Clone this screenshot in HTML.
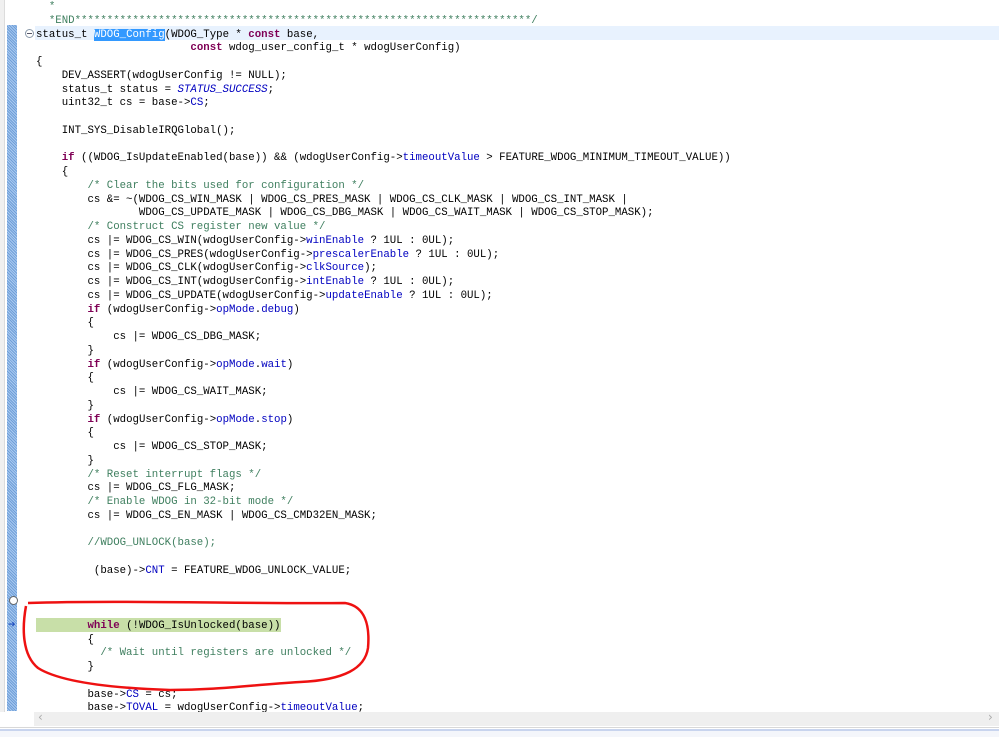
<!DOCTYPE html>
<html><head><meta charset="utf-8"><style>
html,body{margin:0;padding:0;width:999px;height:737px;overflow:hidden;background:#fff;position:relative}
.code{position:absolute;left:36px;top:1px;font-family:"Liberation Mono",monospace;font-size:10.73px;line-height:13.76px;white-space:pre;color:#000}
.l{height:13.76px}
.k{color:#7f0055;font-weight:bold}
.c{color:#3f7f5f}
.f{color:#0000c0}
.i{color:#0000c0;font-style:italic}
.sel{background:#3399ff;color:#fff}
</style></head><body>
<div style="position:absolute;left:0;top:0;width:4px;height:712px;background:#f0f0f0;border-right:1px solid #dcdcdc"></div>
<div style="position:absolute;left:7px;top:25px;width:10px;height:686px;background:repeating-linear-gradient(45deg,#6f9fd8 0 1px,#a9c9f0 1px 2px)"></div>
<div style="position:absolute;left:35px;top:26px;width:964px;height:14px;background:#e8f2fe"></div>
<div style="position:absolute;left:36px;top:618px;width:245px;height:14px;background:#c8dfa8"></div>
<div style="position:absolute;left:25px;top:29px;width:7px;height:7px;border:1px solid #8a99aa;border-radius:50%;font-size:0"><div style="position:absolute;left:1px;top:3px;width:5px;height:1px;background:#556"></div></div>
<div style="position:absolute;left:9px;top:596px;width:7px;height:7px;border:1px solid #666;border-radius:50%;background:#fff"></div>
<div style="position:absolute;left:8px;top:620px;color:#2050c0;font-size:9px;font-family:'DejaVu Sans',sans-serif">➔</div>
<div class="code"><div class="l c">  *</div><div class="l c">  *END***********************************************************************/</div><div class="l">status_t <span class="sel">WDOG_Config</span>(WDOG_Type * <span class="k">const</span> base,</div><div class="l">                        <span class="k">const</span> wdog_user_config_t * wdogUserConfig)</div><div class="l">{</div><div class="l">    DEV_ASSERT(wdogUserConfig != NULL);</div><div class="l">    status_t status = <span class="i">STATUS_SUCCESS</span>;</div><div class="l">    uint32_t cs = base-&gt;<span class="f">CS</span>;</div><div class="l"> </div><div class="l">    INT_SYS_DisableIRQGlobal();</div><div class="l"> </div><div class="l">    <span class="k">if</span> ((WDOG_IsUpdateEnabled(base)) &amp;&amp; (wdogUserConfig-&gt;<span class="f">timeoutValue</span> &gt; FEATURE_WDOG_MINIMUM_TIMEOUT_VALUE))</div><div class="l">    {</div><div class="l c">        /* Clear the bits used for configuration */</div><div class="l">        cs &amp;= ~(WDOG_CS_WIN_MASK | WDOG_CS_PRES_MASK | WDOG_CS_CLK_MASK | WDOG_CS_INT_MASK |</div><div class="l">                WDOG_CS_UPDATE_MASK | WDOG_CS_DBG_MASK | WDOG_CS_WAIT_MASK | WDOG_CS_STOP_MASK);</div><div class="l c">        /* Construct CS register new value */</div><div class="l">        cs |= WDOG_CS_WIN(wdogUserConfig-&gt;<span class="f">winEnable</span> ? 1UL : 0UL);</div><div class="l">        cs |= WDOG_CS_PRES(wdogUserConfig-&gt;<span class="f">prescalerEnable</span> ? 1UL : 0UL);</div><div class="l">        cs |= WDOG_CS_CLK(wdogUserConfig-&gt;<span class="f">clkSource</span>);</div><div class="l">        cs |= WDOG_CS_INT(wdogUserConfig-&gt;<span class="f">intEnable</span> ? 1UL : 0UL);</div><div class="l">        cs |= WDOG_CS_UPDATE(wdogUserConfig-&gt;<span class="f">updateEnable</span> ? 1UL : 0UL);</div><div class="l">        <span class="k">if</span> (wdogUserConfig-&gt;<span class="f">opMode</span>.<span class="f">debug</span>)</div><div class="l">        {</div><div class="l">            cs |= WDOG_CS_DBG_MASK;</div><div class="l">        }</div><div class="l">        <span class="k">if</span> (wdogUserConfig-&gt;<span class="f">opMode</span>.<span class="f">wait</span>)</div><div class="l">        {</div><div class="l">            cs |= WDOG_CS_WAIT_MASK;</div><div class="l">        }</div><div class="l">        <span class="k">if</span> (wdogUserConfig-&gt;<span class="f">opMode</span>.<span class="f">stop</span>)</div><div class="l">        {</div><div class="l">            cs |= WDOG_CS_STOP_MASK;</div><div class="l">        }</div><div class="l c">        /* Reset interrupt flags */</div><div class="l">        cs |= WDOG_CS_FLG_MASK;</div><div class="l c">        /* Enable WDOG in 32-bit mode */</div><div class="l">        cs |= WDOG_CS_EN_MASK | WDOG_CS_CMD32EN_MASK;</div><div class="l"> </div><div class="l c">        //WDOG_UNLOCK(base);</div><div class="l"> </div><div class="l">         (base)-&gt;<span class="f">CNT</span> = FEATURE_WDOG_UNLOCK_VALUE;</div><div class="l"> </div><div class="l"> </div><div class="l"> </div><div class="l">        <span class="k">while</span> (!WDOG_IsUnlocked(base))</div><div class="l">        {</div><div class="l c">          /* Wait until registers are unlocked */</div><div class="l">        }</div><div class="l"> </div><div class="l">        base-&gt;<span class="f">CS</span> = cs;</div><div class="l">        base-&gt;<span class="f">TOVAL</span> = wdogUserConfig-&gt;<span class="f">timeoutValue</span>;</div></div>
<svg style="position:absolute;left:0;top:0" width="999" height="737"><path d="M28,603 C120,600 250,604 345,603 C365,606 370,625 368,648 C365,668 345,680 300,682 C250,685 220,690 170,690 C110,688 60,682 38,668 C22,655 22,628 26,606" fill="none" stroke="#ee1111" stroke-width="2.5"/></svg>
<div style="position:absolute;left:0;top:712px;width:999px;height:25px;background:#fff"></div>
<div style="position:absolute;left:34px;top:712px;width:965px;height:14px;background:#efefef"></div>
<div style="position:absolute;left:38px;top:710px;color:#aaa;font:12px 'DejaVu Sans',sans-serif">‹</div>
<div style="position:absolute;left:988px;top:710px;color:#aaa;font:12px 'DejaVu Sans',sans-serif">›</div>
<div style="position:absolute;left:0;top:727px;width:999px;height:1px;background:#d8d8d8"></div>
<div style="position:absolute;left:0;top:729px;width:999px;height:2px;background:#c8d4ee"></div>
<div style="position:absolute;left:0;top:731px;width:999px;height:6px;background:#f4f6fb"></div>
</body></html>
